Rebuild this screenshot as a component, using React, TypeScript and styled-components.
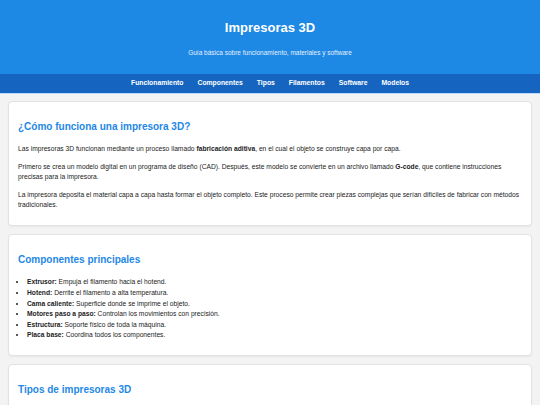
import React from 'react';
import styled, { createGlobalStyle } from 'styled-components';

const GlobalStyle = createGlobalStyle`
  html, body {
    margin: 0;
    padding: 0;
    background: #f3f3f3;
    font-family: "Liberation Sans", Arial, sans-serif;
    font-size: 6.7px;
    line-height: 1.58;
    color: #222;
  }
`;

const Header = styled.header`
  background: #1e88e5;
  color: #fff;
  text-align: center;
  padding: 20px 0 16px;
`;

const Title = styled.h1`
  margin: 0 0 12px;
  font-size: 13px;
  line-height: 1.2;
  font-weight: 700;
`;

const Subtitle = styled.p`
  margin: 0;
  font-size: 6.5px;
  line-height: 1.6;
  color: #e3f0fc;
`;

const Nav = styled.nav`
  background: #1565c0;
  height: 19px;
  display: flex;
  align-items: center;
  justify-content: center;
  gap: 14px;
  border-bottom: 1px solid #bbdefb;
`;

const NavLink = styled.a`
  color: #fff;
  font-weight: 700;
  font-size: 6.8px;
  text-decoration: none;
`;

const Main = styled.main`
  display: flex;
  flex-direction: column;
  gap: 8px;
  padding: 7px 8px 8px;
`;

const Card = styled.section`
  background: #fff;
  border: 1px solid #e2e2e2;
  border-radius: 4px;
  box-shadow: 0 1px 2px rgba(0, 0, 0, 0.05);
  padding: 9px 10px 7.5px 9px;
`;

const Heading = styled.h2`
  margin: 8px 0 9px;
  font-size: 10px;
  line-height: 1.6;
  color: #1e88e5;
`;

const Text = styled.p`
  margin: 7px 0;
`;

const List = styled.ul`
  margin: 7px 0;
  padding-left: 9px;
`;

const sections = [
  'Funcionamiento',
  'Componentes',
  'Tipos',
  'Filamentos',
  'Software',
  'Modelos',
];

const components: [string, string][] = [
  ['Extrusor:', 'Empuja el filamento hacia el hotend.'],
  ['Hotend:', 'Derrite el filamento a alta temperatura.'],
  ['Cama caliente:', 'Superficie donde se imprime el objeto.'],
  ['Motores paso a paso:', 'Controlan los movimientos con precisión.'],
  ['Estructura:', 'Soporte físico de toda la máquina.'],
  ['Placa base:', 'Coordina todos los componentes.'],
];

export default function App() {
  return (
    <>
      <GlobalStyle />
      <Header>
        <Title>Impresoras 3D</Title>
        <Subtitle>Guía básica sobre funcionamiento, materiales y software</Subtitle>
      </Header>
      <Nav>
        {sections.map(s => (
          <NavLink key={s} href={`#${s.toLowerCase()}`}>
            {s}
          </NavLink>
        ))}
      </Nav>
      <Main>
        <Card id="funcionamiento">
          <Heading>¿Cómo funciona una impresora 3D?</Heading>
          <Text>
            Las impresoras 3D funcionan mediante un proceso llamado{' '}
            <strong>fabricación aditiva</strong>, en el cual el objeto se construye capa por
            capa.
          </Text>
          <Text>
            Primero se crea un modelo digital en un programa de diseño (CAD). Después, este
            modelo se convierte en un archivo llamado <strong>G-code</strong>, que contiene
            instrucciones precisas para la impresora.
          </Text>
          <Text>
            La impresora deposita el material capa a capa hasta formar el objeto completo. Este
            proceso permite crear piezas complejas que serían difíciles de fabricar con métodos
            tradicionales.
          </Text>
        </Card>
        <Card id="componentes">
          <Heading>Componentes principales</Heading>
          <List>
            {components.map(([name, desc]) => (
              <li key={name}>
                <strong>{name}</strong> {desc}
              </li>
            ))}
          </List>
        </Card>
        <Card id="tipos">
          <Heading>Tipos de impresoras 3D</Heading>
          <List>
            <li>
              <strong>FDM:</strong> Funden filamento plástico y lo depositan capa a capa.
            </li>
            <li>
              <strong>SLA:</strong> Usan resina líquida que se endurece con luz ultravioleta.
            </li>
            <li>
              <strong>SLS:</strong> Sinterizan polvo con un láser.
            </li>
          </List>
        </Card>
      </Main>
    </>
  );
}
